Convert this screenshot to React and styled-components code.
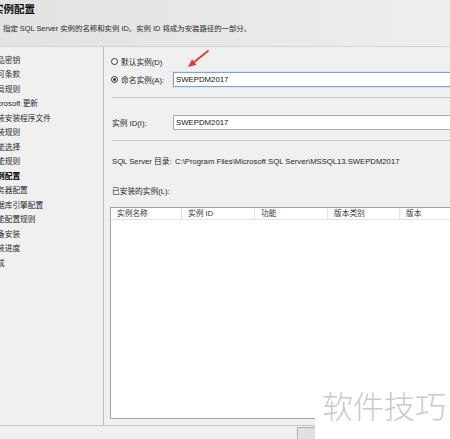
import React from "react";
import styled, { createGlobalStyle } from "styled-components";

const Global = createGlobalStyle`
  html, body { margin: 0; padding: 0; background: #f0f0f0; }
  * { box-sizing: border-box; }
`;

const FONT = `"Liberation Sans", "Noto Sans CJK SC", sans-serif`;

const Window = styled.div`
  position: relative;
  width: 450px;
  height: 439px;
  overflow: hidden;
  display: flex;
  flex-direction: column;
  background: #f0f0f0;
  font-family: ${FONT};
  font-size: 7.7px;
  color: #262626;
`;

const Header = styled.header`
  flex: none;
  height: 47px;
  padding-top: 3px;
  background: linear-gradient(90deg, #e2e2e2, #eeeeee);
  border-bottom: 1px solid #d2d2d2;
  white-space: nowrap;
`;

const Title = styled.h1`
  margin: 0 0 0 -7px;
  font-size: 10.5px;
  line-height: 13px;
  font-weight: 700;
  color: #111;
`;

const Subtitle = styled.p`
  margin: 7px 0 0 3px;
  font-size: 7.4px;
  line-height: 12px;
  color: #2a2a2a;
`;

const Body = styled.div`
  flex: 1;
  display: flex;
  min-height: 0;
`;

const Nav = styled.nav`
  flex: none;
  width: 104px;
  padding-top: 6.75px;
  border-right: 1px solid #bdbdbd;
  overflow: hidden;
  white-space: nowrap;
`;

const NavItem = styled.div`
  margin-left: -10.7px;
  line-height: 14.5px;
  font-weight: ${(p) => (p.$active ? 700 : 400)};
  color: ${(p) => (p.$active ? "#000" : "#2a2a2a")};
`;

const Main = styled.main`
  flex: 1;
  min-width: 0;
  overflow: hidden;
  padding: 7px 0 0 6px;
  white-space: nowrap;
`;

const Row = styled.div`
  display: flex;
  align-items: center;
  height: ${(p) => p.$h || 15}px;
  margin-top: ${(p) => p.$mt || 0}px;
  margin-left: ${(p) => p.$ml || 0}px;
`;

const RadioLabel = styled.label`
  flex: none;
  display: flex;
  align-items: center;
  gap: 3px;
  width: ${(p) => (p.$w ? p.$w + "px" : "auto")};
`;

const RadioCircle = styled.span`
  position: relative;
  flex: none;
  width: 7px;
  height: 7px;
  border: 1px solid #333;
  border-radius: 50%;
  background: #fff;
  &::after {
    content: "";
    display: ${(p) => (p.$checked ? "block" : "none")};
    position: absolute;
    left: 1px;
    top: 1px;
    width: 3px;
    height: 3px;
    border-radius: 50%;
    background: #333;
  }
`;

const FieldLabel = styled.span`
  flex: none;
  width: ${(p) => p.$w}px;
`;

const TextBox = styled.div`
  flex: none;
  width: 320px;
  height: 15px;
  padding-left: 2px;
  display: flex;
  align-items: center;
  background: #fff;
  border: 1px solid ${(p) => (p.$focus ? "#86a3bf" : "#acacac")};
  box-shadow: ${(p) => (p.$focus ? "0 0 0 1px #d3e5f6" : "none")};
  font-size: 7.8px;
  color: #111;
`;

const Separator = styled.hr`
  margin: ${(p) => p.$mt}px 0 0 2px;
  border: 0;
  height: 1px;
  width: 400px;
  background: #c4c4c4;
`;

const TextLine = styled.div`
  line-height: 12px;
  margin-top: ${(p) => p.$mt}px;
  margin-left: 2px;
  display: flex;
`;

const Table = styled.div`
  margin-top: 9px;
  width: 420px;
  height: 212px;
  background: #fff;
  border: 1px solid #a3a3a3;
`;

const TableHead = styled.div`
  display: flex;
  height: 12px;
  border-bottom: 1px solid #e3e3e3;
`;

const HeadCell = styled.div`
  flex: none;
  width: ${(p) => p.$w}px;
  padding-left: 6px;
  line-height: 11px;
  border-right: 1px solid #e3e3e3;
  color: #333;
`;

const Footer = styled.footer`
  flex: none;
  height: 14px;
  border-top: 1px solid #c6c6c6;
  background: #f0f0f0;
  overflow: hidden;
`;

const FooterButton = styled.div`
  margin: 1px 0 0 297px;
  width: 75px;
  height: 20px;
  border: 1px solid #adadad;
  background: #e1e1e1;
`;

const Arrow = styled.svg`
  position: absolute;
  left: 185px;
  top: 48px;
  width: 26px;
  height: 24px;
  overflow: visible;
`;

const Watermark = styled.div`
  position: absolute;
  left: 315px;
  top: 384px;
  right: 0;
  bottom: 0;
  background: #fff;
  padding: 5px 0 0 7px;
  font-family: "Noto Sans CJK SC", sans-serif;
  font-size: 31px;
  line-height: 31px;
  font-weight: 300;
  color: #cacaca;
  white-space: nowrap;
`;

const navItems = [
  "产品密钥",
  "许可条款",
  "全局规则",
  "Microsoft 更新",
  "安装安装程序文件",
  "安装规则",
  "功能选择",
  "功能规则",
  "实例配置",
  "服务器配置",
  "数据库引擎配置",
  "功能配置规则",
  "准备安装",
  "安装进度",
  "完成",
];

const columns = [
  { name: "实例名称", w: 71 },
  { name: "实例 ID", w: 73 },
  { name: "功能", w: 73 },
  { name: "版本类别", w: 72 },
  { name: "版本", w: 100 },
];

export default function App() {
  return (
    <>
      <Global />
      <Window>
        <Header>
          <Title>实例配置</Title>
          <Subtitle>指定 SQL Server 实例的名称和实例 ID。实例 ID 将成为安装路径的一部分。</Subtitle>
        </Header>
        <Body>
          <Nav>
            {navItems.map((t) => (
              <NavItem key={t} $active={t === "实例配置"}>
                {t}
              </NavItem>
            ))}
          </Nav>
          <Main>
            <Row $h={14} $ml={1}>
              <RadioLabel>
                <RadioCircle />
                默认实例(D)
              </RadioLabel>
            </Row>
            <Row $mt={4} $ml={1}>
              <RadioLabel $w={62}>
                <RadioCircle $checked />
                命名实例(A):
              </RadioLabel>
              <TextBox $focus>SWEPDM2017</TextBox>
            </Row>
            <Separator $mt={10} />
            <Row $mt={17} $ml={2}>
              <FieldLabel $w={61}>实例 ID(I):</FieldLabel>
              <TextBox>SWEPDM2017</TextBox>
            </Row>
            <Separator $mt={10} />
            <TextLine $mt={15}>
              <FieldLabel $w={63}>SQL Server 目录:</FieldLabel>
              <span>C:\Program Files\Microsoft SQL Server\MSSQL13.SWEPDM2017</span>
            </TextLine>
            <TextLine $mt={18}>已安装的实例(L):</TextLine>
            <Table>
              <TableHead>
                {columns.map((c) => (
                  <HeadCell key={c.name} $w={c.w}>
                    {c.name}
                  </HeadCell>
                ))}
              </TableHead>
            </Table>
          </Main>
        </Body>
        <Footer>
          <FooterButton />
        </Footer>
        <Arrow viewBox="0 0 26 24">
          <line x1="23" y1="3" x2="9.5" y2="13.8" stroke="#e5382d" strokeWidth="1.8" strokeLinecap="round" />
          <polygon points="3,19 11.4,16.8 7.1,11.3" fill="#e5382d" />
        </Arrow>
        <Watermark>软件技巧</Watermark>
      </Window>
    </>
  );
}
